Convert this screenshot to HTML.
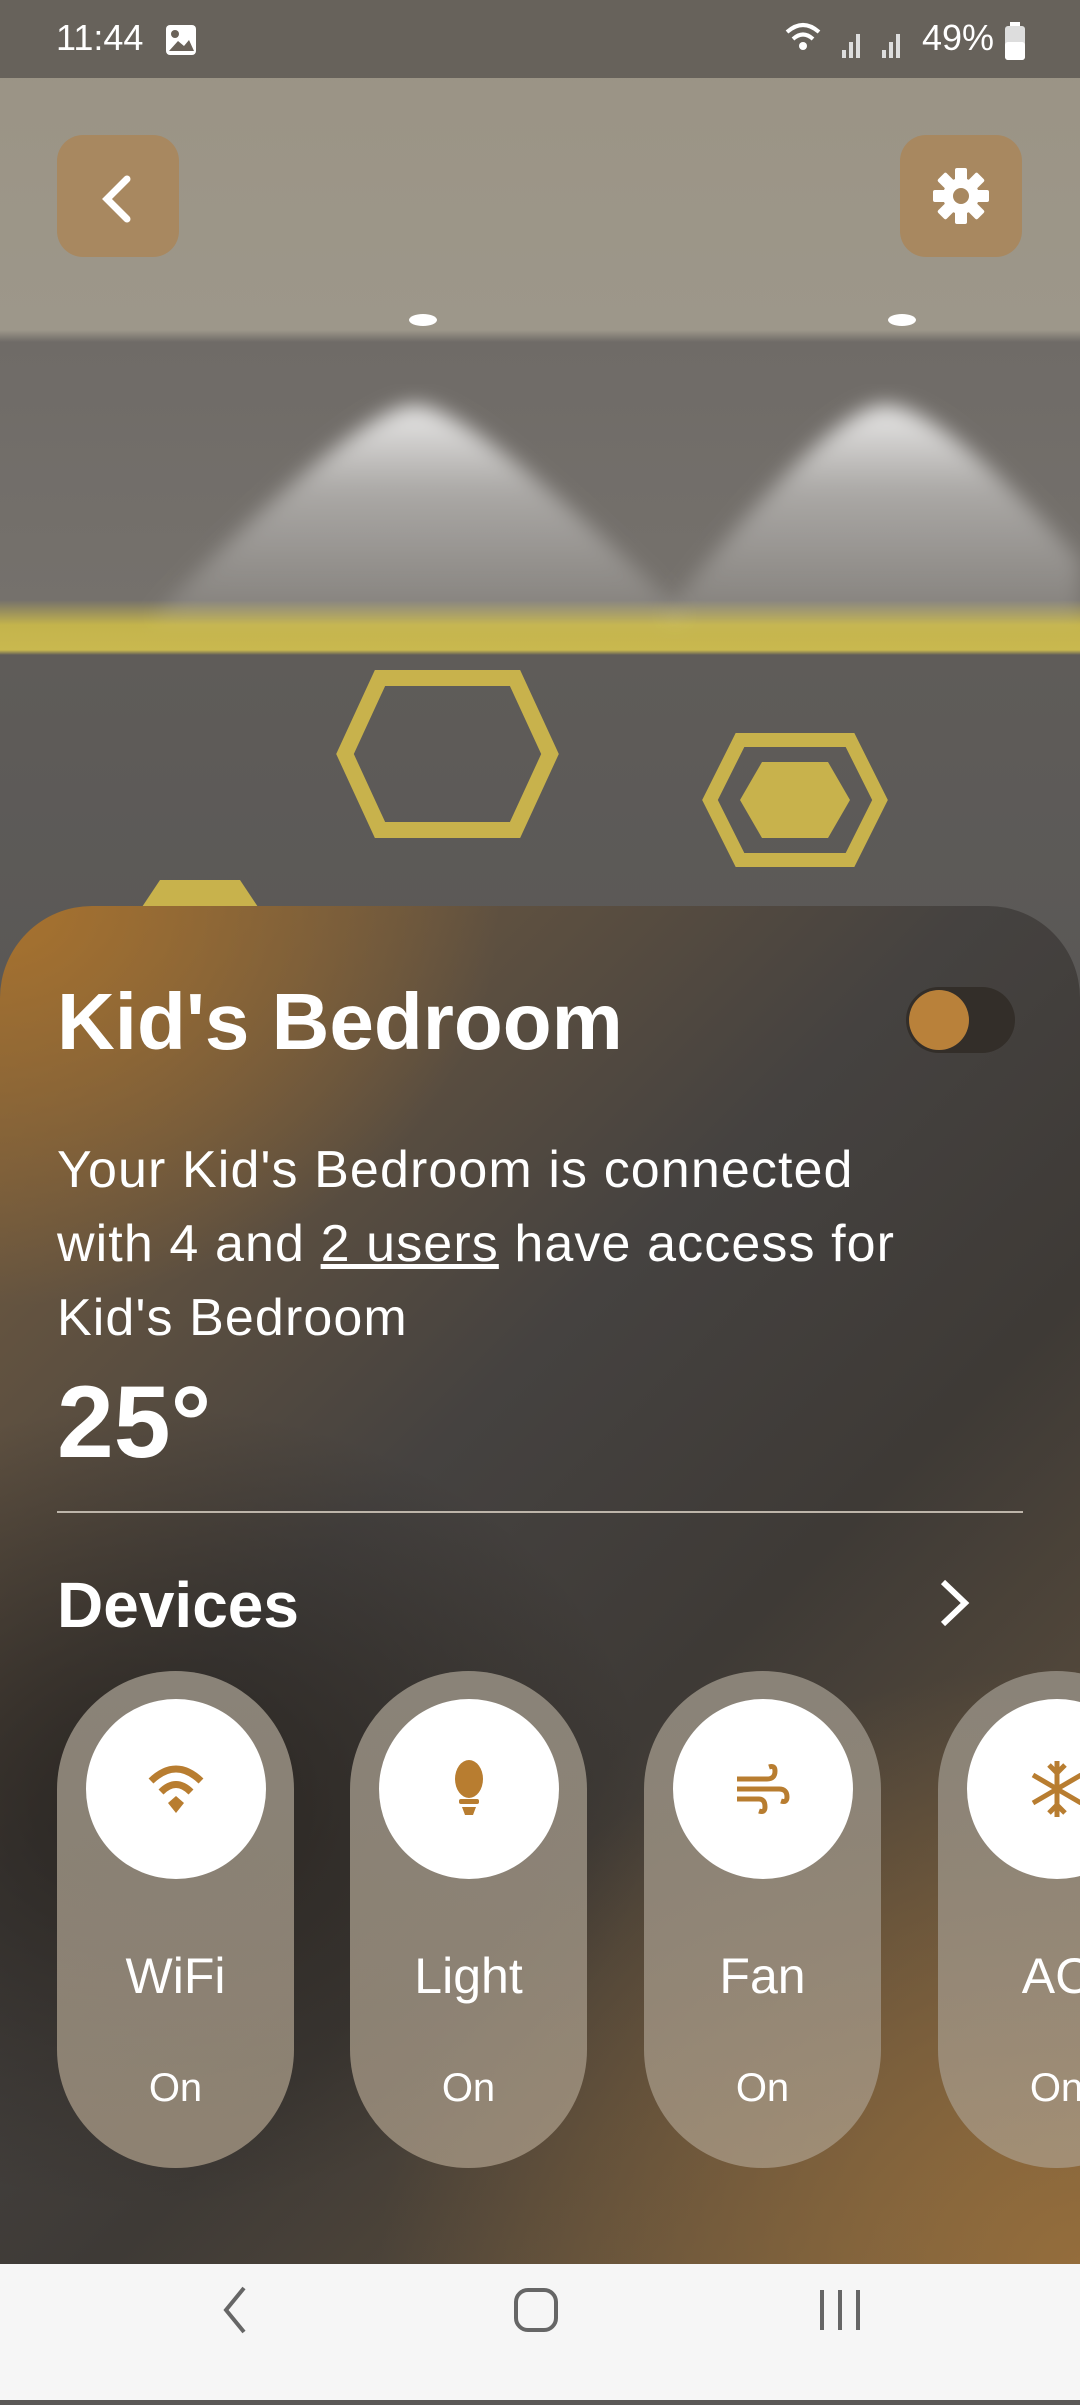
<!DOCTYPE html>
<html><head><meta charset="utf-8">
<style>
*{margin:0;padding:0;box-sizing:border-box}
body{width:1080px;height:2400px;overflow:hidden;position:relative;font-family:"Liberation Sans",sans-serif;background:#5a5856}
.photo{position:absolute;left:0;top:0;width:1080px;height:1000px;
background:linear-gradient(#9a9384 0,#9d978a 330px,#6f6b67 342px,#75716c 600px,#c4b44c 625px,#c9b84f 650px,#5f5c59 655px,#5a5856 1000px)}
.status{position:absolute;left:0;top:0;width:1080px;height:78px;background:rgba(100,95,88,.95);color:#fff;font-size:36px}
.btn{position:absolute;width:122px;height:122px;border-radius:26px;background:#a88860}
.panel{position:absolute;left:0;top:906px;width:1080px;height:1360px;border-radius:92px 92px 0 0;overflow:hidden;
background:
radial-gradient(ellipse 500px 400px at 0 0,rgba(170,115,45,.95),rgba(170,115,45,0)),
radial-gradient(ellipse 700px 600px at 1080px 1360px,rgba(150,110,60,.95),rgba(150,110,60,0)),
radial-gradient(ellipse 500px 400px at 150px 900px,rgba(30,25,20,.7),rgba(30,25,20,0)),
linear-gradient(135deg,#7a6040 0,#454240 40%,#3e3a36 60%,#6e5a40 100%)}
.t{position:absolute;color:#fff}
.card{position:absolute;top:1671px;width:237px;height:497px;border-radius:119px;background:linear-gradient(#8a8378 0,rgba(170,155,135,.75) 100%)}
.circ{position:absolute;left:29px;top:28px;width:180px;height:180px;border-radius:50%;background:#fff;display:flex;align-items:center;justify-content:center}
.lbl{position:absolute;left:0;width:237px;text-align:center;color:#fff}
.nav{position:absolute;left:0;top:2264px;width:1080px;height:136px;background:#f6f6f6}
</style></head><body>
<div class="photo">
<svg width="1080" height="1000" style="position:absolute;left:0;top:0">
<defs><linearGradient id="lg" x1="0" y1="0" x2="0" y2="1"><stop offset="0" stop-color="#fff" stop-opacity=".85"/><stop offset=".4" stop-color="#fff" stop-opacity=".4"/><stop offset="1" stop-color="#fff" stop-opacity=".1"/></linearGradient>
<filter id="bl"><feGaussianBlur stdDeviation="10"/></filter></defs>
<path d="M415 405 Q470 405 690 620 L150 620 Q360 405 415 405Z" fill="url(#lg)" filter="url(#bl)"/>
<path d="M885 405 Q940 405 1080 560 L1080 620 L660 620 Q830 405 885 405Z" fill="url(#lg)" filter="url(#bl)"/>
<polygon points="380,678 515,678 550,754 515,830 380,830 345,754" fill="none" stroke="#c8b24c" stroke-width="16"/>
<polygon points="740,740 850,740 880,800 850,860 740,860 710,800" fill="none" stroke="#c8b24c" stroke-width="14"/>
<polygon points="762,762 828,762 850,800 828,838 762,838 740,800" fill="#c8b24c"/>
<polygon points="160,880 240,880 260,910 140,910" fill="#c8b24c"/>
<ellipse cx="423" cy="320" rx="14" ry="6" fill="#fff"/><ellipse cx="902" cy="320" rx="14" ry="6" fill="#fff"/>
</svg>
</div>
<div class="status">
<span style="position:absolute;left:56px;top:17px">11:44</span>
<svg style="position:absolute;left:165px;top:24px" width="32" height="32"><rect x="1" y="1" width="30" height="30" rx="4" fill="#fff"/><circle cx="10" cy="10" r="4" fill="#6a6259"/><path d="M4 27 L13 17 L19 22 L24 16 L29 27Z" fill="#6a6259"/></svg>
<svg style="position:absolute;left:785px;top:22px" width="120" height="40"><path d="M2 10 Q18 -4 34 10" stroke="#fff" stroke-width="4" fill="none"/><path d="M8 17 Q18 8 28 17" stroke="#fff" stroke-width="4" fill="none"/><circle cx="18" cy="24" r="4" fill="#fff"/><rect x="57" y="28" width="4" height="8" fill="#ddd"/><rect x="64" y="20" width="4" height="16" fill="#ddd"/><rect x="71" y="12" width="4" height="24" fill="#ddd"/><rect x="97" y="28" width="4" height="8" fill="#ddd"/><rect x="104" y="20" width="4" height="16" fill="#ddd"/><rect x="111" y="12" width="4" height="24" fill="#ddd"/></svg>
<span style="position:absolute;left:922px;top:17px">49%</span>
<svg style="position:absolute;left:1004px;top:22px" width="22" height="40"><rect x="6" y="0" width="10" height="5" fill="#fff"/><rect x="1" y="4" width="20" height="34" rx="3" fill="#ddd"/><rect x="1" y="20" width="20" height="18" rx="3" fill="#fff"/></svg>
</div>
<div class="btn" style="left:57px;top:135px"><svg width="122" height="122"><path d="M70 44 L50 64 L70 84" stroke="#fff" stroke-width="7" fill="none" stroke-linecap="round"/></svg></div>
<div class="btn" style="left:900px;top:135px"><svg width="122" height="122" viewBox="0 0 122 122"><g transform="translate(61,61)" fill="#fff"><circle r="18"/><g id="tt"><rect x="-6" y="-28" width="12" height="14" rx="2"/></g><use href="#tt" transform="rotate(45)"/><use href="#tt" transform="rotate(90)"/><use href="#tt" transform="rotate(135)"/><use href="#tt" transform="rotate(180)"/><use href="#tt" transform="rotate(225)"/><use href="#tt" transform="rotate(270)"/><use href="#tt" transform="rotate(315)"/><circle r="8" fill="#a88860"/></g></svg></div>
<div class="panel"></div>
<div class="t" style="left:57px;top:976px;font-size:80px;font-weight:bold">Kid's Bedroom</div>
<div style="position:absolute;left:906px;top:987px;width:109px;height:66px;border-radius:33px;background:#332e29"><div style="position:absolute;left:3px;top:3px;width:60px;height:60px;border-radius:50%;background:#b9813a"></div></div>
<div class="t" style="left:57px;top:1133px;width:1000px;font-size:52px;line-height:74px;letter-spacing:1.1px">Your Kid's Bedroom is connected<br>with 4 and <u>2 users</u> have access for<br>Kid's Bedroom</div>
<div class="t" style="left:57px;top:1364px;font-size:102px;font-weight:bold">25°</div>
<div style="position:absolute;left:57px;top:1511px;width:966px;height:2px;background:#bdb5aa"></div>
<div class="t" style="left:57px;top:1568px;font-size:64px;font-weight:bold">Devices</div>
<svg style="position:absolute;left:935px;top:1578px" width="40" height="50"><path d="M8 4 L30 25 L8 46" stroke="#fff" stroke-width="6" fill="none"/></svg>

<div class="card" style="left:57px"><div class="circ"><svg width="60" height="60" viewBox="0 0 60 60"><path d="M5 22 Q30 -2 55 22" stroke="#b87d30" stroke-width="7" fill="none"/><path d="M15 33 Q30 18 45 33" stroke="#b87d30" stroke-width="7" fill="none"/><path d="M22 44 L30 37 L38 44 L30 54Z" fill="#b87d30"/></svg></div><div class="lbl" style="top:276px;font-size:50px">WiFi</div><div class="lbl" style="top:395px;font-size:40px">On</div></div>
<div class="card" style="left:350px"><div class="circ"><svg width="60" height="60" viewBox="0 0 60 60"><ellipse cx="30" cy="20" rx="14" ry="19" fill="#b87d30"/><rect x="20" y="40" width="20" height="5" rx="2" fill="#b87d30"/><path d="M23 48 H37 L34 56 H26Z" fill="#b87d30"/></svg></div><div class="lbl" style="top:276px;font-size:50px">Light</div><div class="lbl" style="top:395px;font-size:40px">On</div></div>
<div class="card" style="left:644px"><div class="circ"><svg width="60" height="60" viewBox="0 0 60 60" fill="none" stroke="#b87d30" stroke-width="5"><path d="M4 20 H34 Q42 20 42 12 Q42 6 36 8"/><path d="M4 30 H46 Q54 30 54 38 Q54 44 48 42"/><path d="M4 40 H26 Q32 40 32 48 Q32 54 26 52"/></svg></div><div class="lbl" style="top:276px;font-size:50px">Fan</div><div class="lbl" style="top:395px;font-size:40px">On</div></div>
<div class="card" style="left:938px"><div class="circ"><svg width="60" height="60" viewBox="0 0 60 60" stroke="#b87d30" stroke-width="5"><path d="M30 2 V58 M6 16 L54 44 M6 44 L54 16"/><path d="M22 6 L30 14 L38 6 M22 54 L30 46 L38 54" fill="none"/></svg></div><div class="lbl" style="top:276px;font-size:50px">AC</div><div class="lbl" style="top:395px;font-size:40px">On</div></div>

<div class="nav">
<svg width="1080" height="136"><path d="M244 24 L226 46 L244 68" stroke="#666" stroke-width="4" fill="none"/><rect x="516" y="26" width="40" height="40" rx="12" stroke="#666" stroke-width="4" fill="none"/><path d="M822 26 V66 M840 26 V66 M858 26 V66" stroke="#666" stroke-width="4"/></svg>
</div>
</body></html>
